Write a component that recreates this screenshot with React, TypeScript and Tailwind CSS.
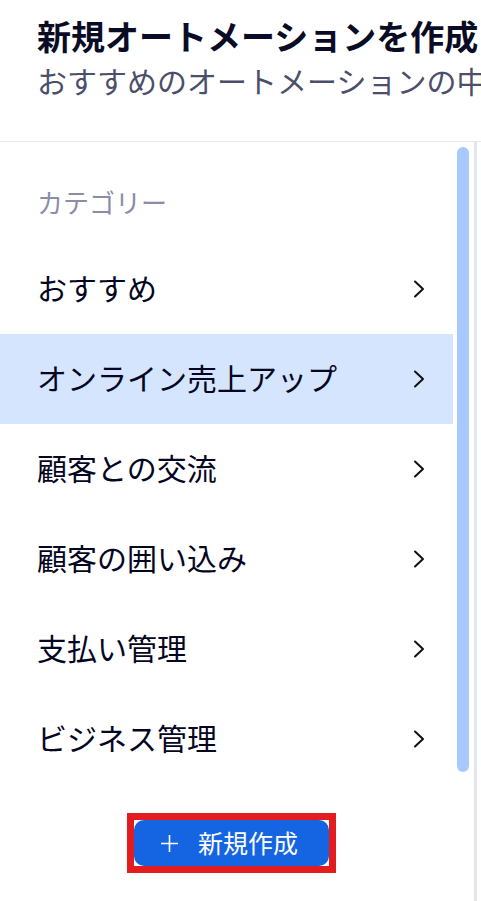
const categories = [
  { name: "おすすめ", active: false },
  { name: "オンライン売上アップ", active: true },
  { name: "顧客との交流", active: false },
  { name: "顧客の囲い込み", active: false },
  { name: "支払い管理", active: false },
  { name: "ビジネス管理", active: false },
];

function Chevron() {
  return (
    <svg width="12" height="18" viewBox="0 0 12 18" fill="none">
      <path d="M2 1.5L10 9L2 16.5" stroke="#111" strokeWidth="2" strokeLinecap="round" strokeLinejoin="round" />
    </svg>
  );
}

export default function App() {
  return (
    <div
      className="w-[481px] h-[901px] overflow-hidden bg-white"
      style={{ fontFamily: '"Noto Sans CJK JP", "Noto Sans", sans-serif' }}
    >
      {/* Header */}
      <header className="h-[141px] pl-[37px] pt-[14px] whitespace-nowrap">
        <h1 className="text-[34px] leading-[44px] font-bold text-[#0a0c26]">
          新規オートメーションを作成
        </h1>
        <p className="text-[30px] leading-[44px] text-[#4c4f6a]">
          おすすめのオートメーションの中から選んでください
        </p>
      </header>

      <div className="flex border-t border-[#e6e6e6] h-[760px]">
        <div className="w-[477px] shrink-0 flex border-r-[3px] border-[#e3e6ec]">
          {/* Category list */}
          <nav className="w-[453px] shrink-0 pt-[40px]">
            <div className="pl-[37px] text-[26px] leading-[40px] text-[#8b8da8] mb-[22px]">
              カテゴリー
            </div>
            {categories.map((c) => (
              <div
                key={c.name}
                className={
                  c.active
                    ? "h-[90px] flex items-center justify-between pl-[37px] pr-[28px] bg-[#d5e5fe]"
                    : "h-[90px] flex items-center justify-between pl-[37px] pr-[28px]"
                }
              >
                <span className="text-[30px] leading-[40px] pb-[4px] text-[#040622] whitespace-nowrap">{c.name}</span>
                <Chevron />
              </div>
            ))}
            <div className="mt-[29px] ml-[127px] w-[209px] h-[60px] border-[7px] border-[#e31c1f]">
              <button className="w-full h-full rounded-[10px] bg-[#1565e3] flex items-center pl-[26px] gap-[19px] text-white">
                <svg width="19" height="19" viewBox="0 0 19 19" fill="none">
                  <path d="M9.5 1v17M1 9.5h17" stroke="white" strokeWidth="1.6" />
                </svg>
                <span className="text-[25px] leading-none pb-[2px]">新規作成</span>
              </button>
            </div>
          </nav>

          {/* Scrollbar */}
          <div className="pl-[4px] pt-[5px]">
            <div className="w-[12px] h-[625px] rounded-full bg-[#a9c9fe]" />
          </div>
        </div>
      </div>
    </div>
  );
}
